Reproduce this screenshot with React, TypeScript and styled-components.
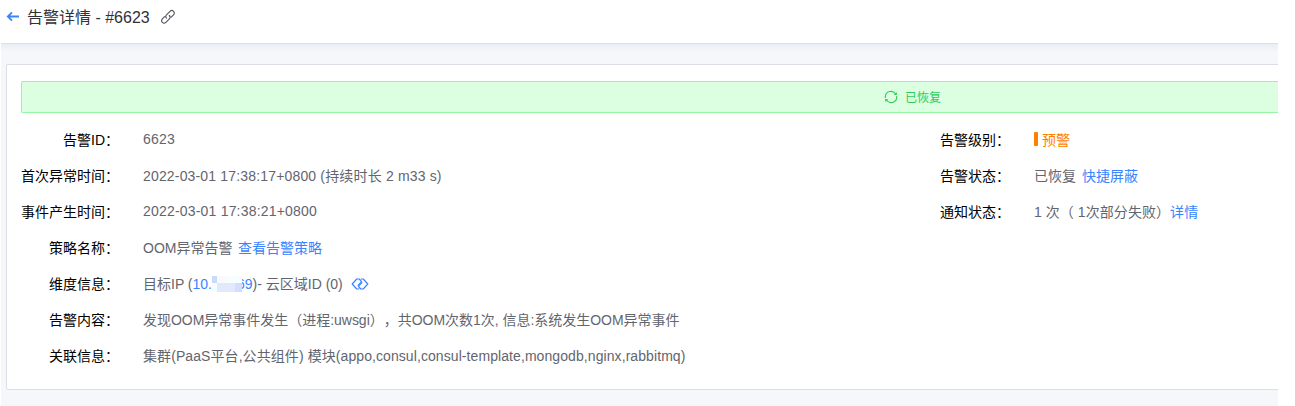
import React from 'react';
import styled, { createGlobalStyle } from 'styled-components';

const GlobalStyle = createGlobalStyle`
  * { box-sizing: border-box; }
  body {
    margin: 0;
    background: #fff;
    font-family: "Liberation Sans", "Noto Sans CJK SC", sans-serif;
    font-size: 14px;
    color: #63656e;
    text-spacing-trim: space-all;
  }
`;

const Page = styled.div`
  width: 1278px;
  height: 406px;
  padding-left: 1px;
  display: flex;
  flex-direction: column;
  overflow: hidden;
`;

const Header = styled.header`
  height: 44px;
  flex: none;
  display: flex;
  align-items: flex-start;
  padding: 5px 0 0 5px;
  border-bottom: 1px solid #dcdee5;
`;

const BackIcon = styled.svg`
  width: 14px;
  height: 12px;
  margin: 6px 7px 0 0;
  flex: none;
`;

const Title = styled.h1`
  margin: 0;
  font-size: 16px;
  font-weight: 400;
  line-height: 25px;
  color: #313238;
  white-space: pre;
`;

const CopyIcon = styled.svg`
  width: 16px;
  height: 16px;
  margin: 4px 0 0 10px;
  flex: none;
`;

const Content = styled.main`
  flex: 1;
  padding: 20px 0 16px 5px;
  background: linear-gradient(#eaedf6, #f5f7fb 8px);
`;

const Card = styled.section`
  height: 326px;
  padding: 16px 0 0 14px;
  background: #fff;
  border: 1px solid #dcdee5;
  border-right: 0;
  border-radius: 2px 0 0 2px;
`;

const Banner = styled.div`
  height: 32px;
  display: flex;
  align-items: center;
  padding: 0 0 1px 862px;
  gap: 7px;
  background: #dcffe2;
  border: 1px solid #94f5a4;
  border-right: 0;
  border-radius: 2px 0 0 2px;
  color: #2dcb56;
  font-size: 12px;
`;

const Details = styled.div`
  display: grid;
  grid-template-columns: 919px 1fr;
  padding-top: 9px;
`;

const Column = styled.dl`
  margin: 0;
`;

const Row = styled.div<{ $labelWidth: number }>`
  display: grid;
  grid-template-columns: ${(p) => p.$labelWidth}px 1fr;
  column-gap: 24px;
  height: 36px;
  line-height: 36px;
  white-space: pre;
`;

const Label = styled.dt`
  text-align: right;
  color: #000;
`;

const Value = styled.dd<{ $lift?: boolean; $tracking?: number }>`
  margin: 0;
  display: flex;
  align-items: center;
  height: ${(p) => (p.$lift ? 34 : 36)}px;
  letter-spacing: ${(p) => p.$tracking ?? 0}px;
`;

const Link = styled.a<{ $gap?: number }>`
  color: #3a84ff;
  margin-left: ${(p) => p.$gap ?? 0}px;
`;

const Level = styled.span`
  display: flex;
  align-items: center;
  gap: 4px;
  color: #ff8000;
  &::before {
    content: '';
    width: 4px;
    height: 14px;
    margin-top: -2px;
    border-radius: 1px;
    background: #ff8000;
  }
`;

const MaskedIp = styled.span`
  position: relative;
  display: flex;
  width: 60px;
  justify-content: space-between;
  color: #3a84ff;
`;

const Mosaic = styled.svg`
  position: absolute;
  left: 19px;
  top: 10px;
  width: 30px;
  height: 16px;
`;

const RelationIcon = styled.svg`
  width: 18px;
  height: 12px;
  margin-left: 8px;
`;

const LEFT_LABEL = 98;
const RIGHT_LABEL = 70;

export default function App() {
  return (
    <>
      <GlobalStyle />
      <Page>
        <Header>
          <BackIcon viewBox="0 0 14 12" fill="none" stroke="#3a84ff" strokeWidth="1.8">
            <path d="M13 5.5H2M6 1.3 1.8 5.5 6 9.7" />
          </BackIcon>
          <Title>告警详情 - #6623</Title>
          <CopyIcon viewBox="0 0 16 16" fill="none" stroke="#55575f" strokeWidth="1.15" strokeLinecap="round">
            <path d="M6.5 9.2C5.4 8 5.6 6.8 6.5 5.9L10 2.4C11.1 1.3 12.5 1.3 13.5 2.3 14.6 3.4 14.6 4.7 13.5 5.8L11.2 8.1" />
            <path d="M9.3 6.5C10.4 7.7 10.3 8.9 9.4 9.8L5.9 13.3C4.8 14.4 3.4 14.4 2.4 13.4 1.3 12.3 1.3 11 2.4 9.9L4.6 7.7" />
          </CopyIcon>
        </Header>
        <Content>
          <Card>
            <Banner>
              <svg width="14" height="14" viewBox="0 0 14 14" fill="none" stroke="#2dcb56" strokeWidth="1.1">
                <path d="M1.3 8V6.6A5.6 5.6 0 0 1 11.6 4M12.7 6V7.4A5.6 5.6 0 0 1 2.4 10" />
                <path d="M12.3 2.4V4.5H10.3M1.7 11.6V9.5H3.7" />
              </svg>
              <span>已恢复</span>
            </Banner>
            <Details>
              <Column>
                <Row $labelWidth={LEFT_LABEL}>
                  <Label>告警ID：</Label>
                  <Value $lift $tracking={0.2}>6623</Value>
                </Row>
                <Row $labelWidth={LEFT_LABEL}>
                  <Label>首次异常时间：</Label>
                  <Value $tracking={0.165}>2022-03-01 17:38:17+0800 (持续时长 2 m33 s)</Value>
                </Row>
                <Row $labelWidth={LEFT_LABEL}>
                  <Label>事件产生时间：</Label>
                  <Value $lift $tracking={0.195}>2022-03-01 17:38:21+0800</Value>
                </Row>
                <Row $labelWidth={LEFT_LABEL}>
                  <Label>策略名称：</Label>
                  <Value>
                    OOM异常告警<Link $gap={5.5}>查看告警策略</Link>
                  </Value>
                </Row>
                <Row $labelWidth={LEFT_LABEL}>
                  <Label>维度信息：</Label>
                  <Value>
                    <span>目标IP (</span>
                    <MaskedIp>
                      <span>10.</span>
                      <span>69</span>
                      <Mosaic viewBox="0 0 30 16" shapeRendering="crispEdges">
                        <path fill="#fafbff" d="M0 0h30v16H0z" />
                        <path fill="#c9dafc" d="M0 0h5v7H0z" />
                        <path fill="#fcf9fc" d="M5 0h9v7H5z" />
                        <path fill="#f8fdff" d="M14 0h16v7H14zM0 7h5v9H0z" />
                        <path fill="#e1e9fc" d="M5 7h18v9H5z" />
                        <path fill="#d2dffc" d="M23 7h7v9h-7z" />
                      </Mosaic>
                    </MaskedIp>
                    <span>)- 云区域ID (0)</span>
                    <RelationIcon viewBox="0 0 18 12" fill="none" stroke="#3a84ff" strokeWidth="1.2" strokeLinejoin="round">
                      <path d="M8.3 11H5.8L1.2 6 5.8 1H8.2L10.6 3.6 6.8 7.6" />
                      <path d="M9.7 1H12.2L16.8 6 12.2 11H9.8L7.4 8.4 11.2 4.4" />
                    </RelationIcon>
                  </Value>
                </Row>
                <Row $labelWidth={LEFT_LABEL}>
                  <Label>告警内容：</Label>
                  <Value $tracking={-0.02}>发现OOM异常事件发生（进程:uwsgi），共OOM次数1次, 信息:系统发生OOM异常事件</Value>
                </Row>
                <Row $labelWidth={LEFT_LABEL}>
                  <Label>关联信息：</Label>
                  <Value $tracking={0.08}>集群(PaaS平台,公共组件) 模块(appo,consul,consul-template,mongodb,nginx,rabbitmq)</Value>
                </Row>
              </Column>
              <Column>
                <Row $labelWidth={RIGHT_LABEL}>
                  <Label>告警级别：</Label>
                  <Value>
                    <Level>预警</Level>
                  </Value>
                </Row>
                <Row $labelWidth={RIGHT_LABEL}>
                  <Label>告警状态：</Label>
                  <Value>
                    已恢复<Link $gap={6}>快捷屏蔽</Link>
                  </Value>
                </Row>
                <Row $labelWidth={RIGHT_LABEL}>
                  <Label>通知状态：</Label>
                  <Value $tracking={0.06}>
                    1 次（ 1次部分失败）<Link>详情</Link>
                  </Value>
                </Row>
              </Column>
            </Details>
          </Card>
        </Content>
      </Page>
    </>
  );
}
